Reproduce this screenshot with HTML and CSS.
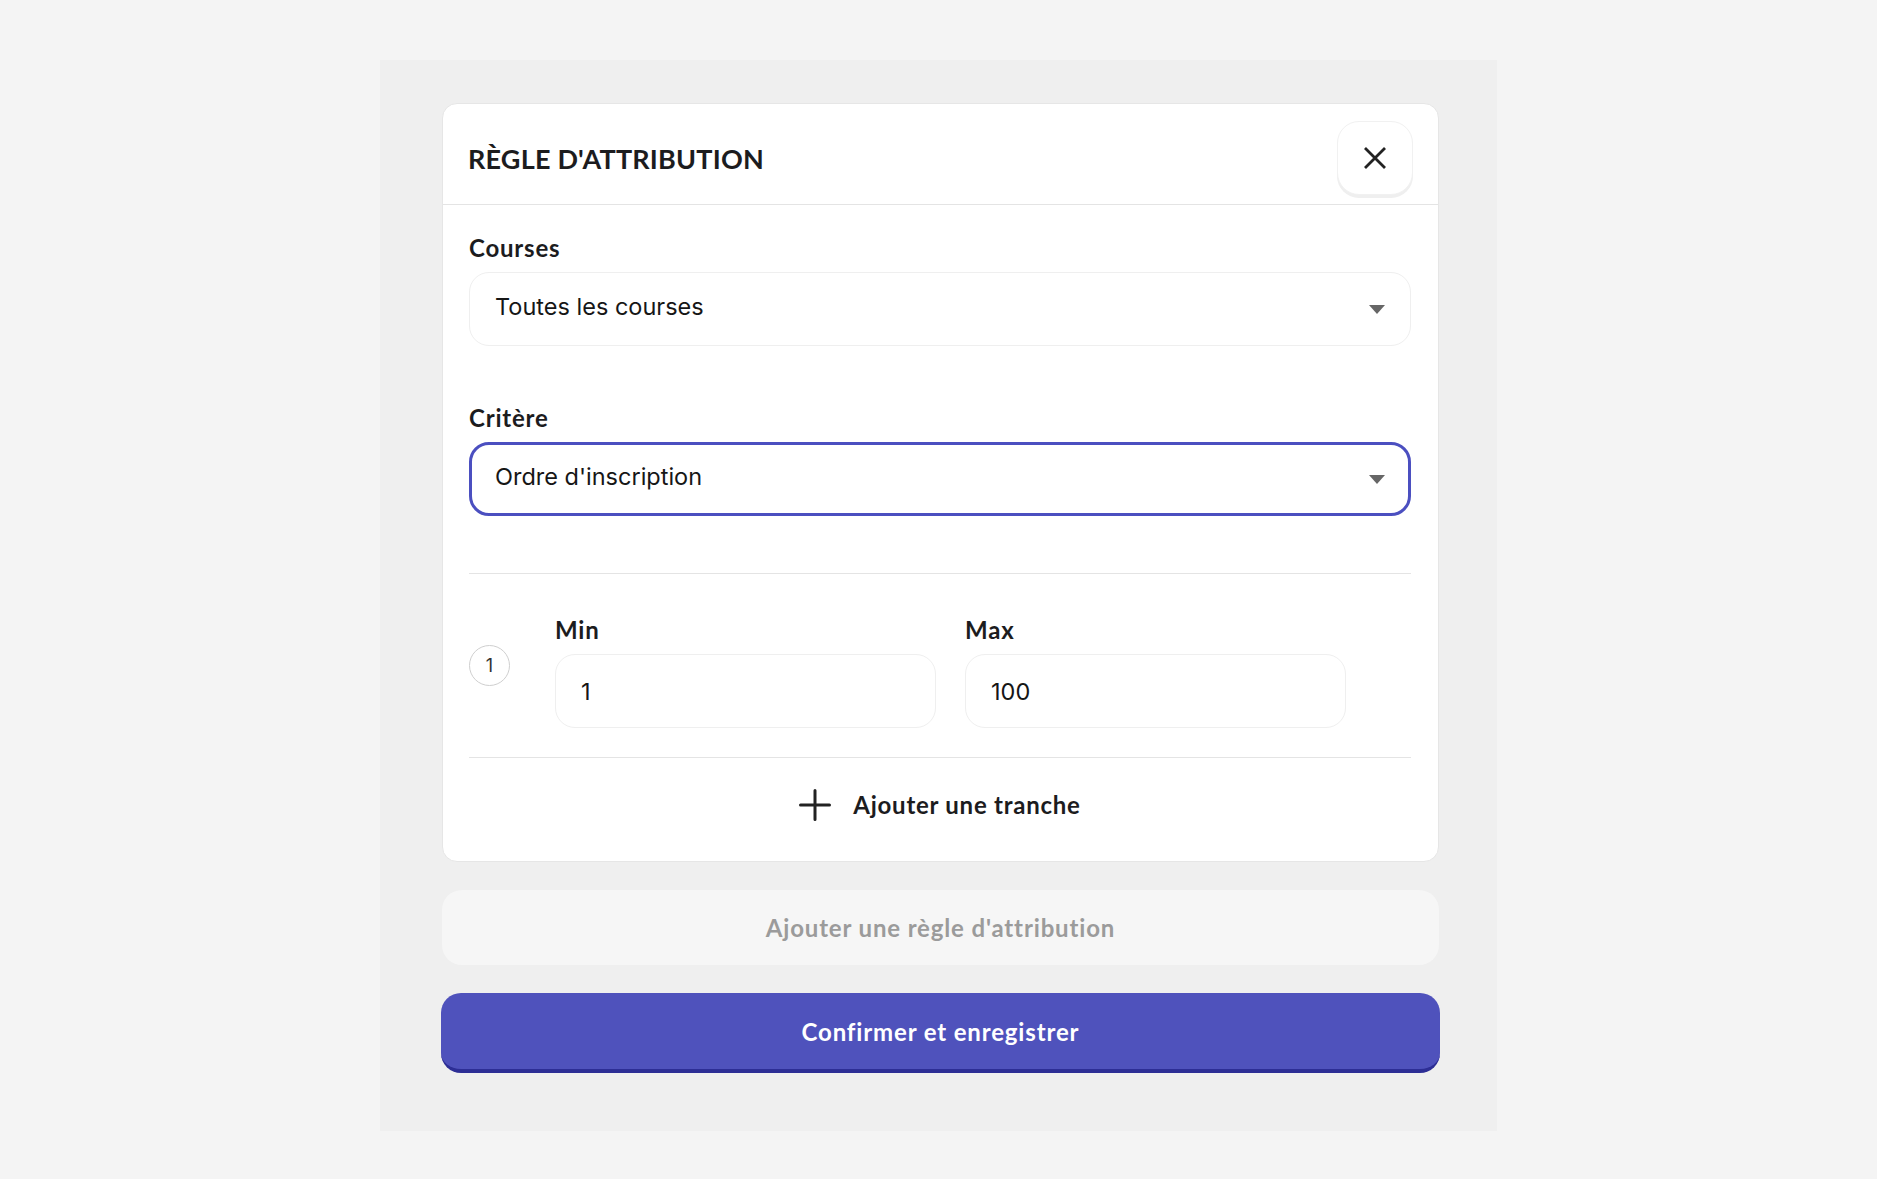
FILE: index.html
```html
<!DOCTYPE html>
<html lang="fr">
<head>
    <meta charset="UTF-8">
    <meta name="viewport" content="width=device-width, initial-scale=1.0">
    <title>Règle d'attribution</title>
    <link rel="stylesheet" href="styles.css">
</head>
<body>

    <div class="panel">

        <div class="card">
            <div class="card-header">
                <h1 class="card-title">RÈGLE D'ATTRIBUTION</h1>
                <button class="close-btn" type="button" aria-label="Fermer">
                    <svg width="24" height="24" viewBox="0 0 24 24">
                        <path d="M2 2 L22 22 M22 2 L2 22" stroke="#222" stroke-width="2.8" fill="none"/>
                    </svg>
                </button>
            </div>

            <div class="card-body">
                <div class="field">
                    <label class="field-label">Courses</label>
                    <div class="select">
                        <span>Toutes les courses</span>
                        <span class="caret"></span>
                    </div>
                </div>

                <div class="field">
                    <label class="field-label">Critère</label>
                    <div class="select select-focus">
                        <span>Ordre d'inscription</span>
                        <span class="caret"></span>
                    </div>
                </div>

                <div class="tranche">
                    <span class="tranche-num">1</span>
                    <div class="tranche-field">
                        <label class="field-label">Min</label>
                        <div class="input">1</div>
                    </div>
                    <div class="tranche-field">
                        <label class="field-label">Max</label>
                        <div class="input">100</div>
                    </div>
                </div>

                <button class="add-tranche" type="button">
                    <svg width="32" height="32" viewBox="0 0 32 32">
                        <path d="M16 1.5 V30.5 M1.5 16 H30.5" stroke="#222" stroke-width="3" stroke-linecap="round" fill="none"/>
                    </svg>
                    <span>Ajouter une tranche</span>
                </button>
            </div>
        </div>

        <button class="ghost-btn" type="button">Ajouter une règle d'attribution</button>
        <button class="primary-btn" type="button">Confirmer et enregistrer</button>

    </div>

</body>
</html>
```

FILE: styles.css
```css
body {
    margin: 0;
    background-color: #f4f4f4;
    font-family: Lato, "Open Sans", sans-serif;
    color: #1c1c1e;
}
button {
    font-family: inherit;
    cursor: pointer;
}
.panel {
    width: 1117px;
    margin: 60px auto 0;
    padding: 43px 58px 58px 62px;
    box-sizing: border-box;
    background-color: #efefef;
}
.card {
    background-color: #fff;
    border: 1px solid #e6e6e6;
    border-radius: 15px;
}
.card-header {
    display: flex;
    align-items: center;
    justify-content: space-between;
    padding: 17px 25px 9px 25px;
    border-bottom: 1px solid #e4e4e4;
}
.card-title {
    margin: 0;
    font-size: 27px;
    font-weight: 700;
    letter-spacing: 0.2px;
}
.close-btn {
    width: 76px;
    height: 74px;
    display: flex;
    align-items: center;
    justify-content: center;
    background-color: #fff;
    border: 1px solid #f1f1f1;
    border-radius: 22px;
    box-shadow: 0 3px 0 #efefef;
}
.card-body {
    padding: 29px 27px 0 26px;
}
.field {
    margin-bottom: 58px;
}
.field + .field {
    margin-bottom: 57px;
}
.field-label {
    display: block;
    font-size: 24px;
    font-weight: 700;
    line-height: 28px;
    letter-spacing: 0.8px;
    margin-bottom: 10px;
}
.select,
.input {
    height: 74px;
    box-sizing: border-box;
    display: flex;
    align-items: center;
    justify-content: space-between;
    padding: 0 25px;
    border: 1px solid #efefef;
    border-radius: 20px;
    font-family: Inter, "Noto Sans", sans-serif;
    font-size: 23.5px;
    color: #161616;
}
.select {
    padding-bottom: 5px;
}
.select-focus {
    border: 3px solid #4b4fc0;
    padding: 0 23px 5px;
}
.caret {
    width: 0;
    height: 0;
    margin-top: 5px;
    border-left: 8.5px solid transparent;
    border-right: 8.5px solid transparent;
    border-top: 9px solid #666;
}
.tranche {
    display: flex;
    align-items: flex-start;
    padding: 42px 0 29px;
    border-top: 1px solid #e4e4e4;
    border-bottom: 1px solid #e4e4e4;
}
.tranche-num {
    width: 41px;
    height: 41px;
    box-sizing: border-box;
    margin-top: 29px;
    margin-right: 45px;
    border: 1.5px solid #cfcfcf;
    border-radius: 50%;
    display: flex;
    align-items: center;
    justify-content: center;
    font-family: Inter, "Noto Sans", sans-serif;
    font-size: 18px;
    color: #333;
}
.tranche-field {
    width: 381px;
    margin-right: 29px;
}
.add-tranche {
    width: 100%;
    height: 103px;
    padding: 0 0 10px;
    display: flex;
    align-items: center;
    justify-content: center;
    gap: 22px;
    background: none;
    border: none;
    font-size: 24px;
    font-weight: 700;
    letter-spacing: 0.75px;
    color: #1c1c1e;
}
.ghost-btn,
.primary-btn {
    display: block;
    border-radius: 20px;
    font-size: 24px;
    font-weight: 700;
    letter-spacing: 0.85px;
}
.ghost-btn {
    width: 100%;
    height: 75px;
    margin-top: 28px;
    background-color: #f6f6f6;
    border: none;
    color: #9b9b9b;
}
.primary-btn {
    width: calc(100% + 2px);
    height: 80px;
    margin: 28px 0 0 -1px;
    background-color: #4f52bc;
    border: none;
    border-bottom: 4px solid #2d2e95;
    color: #fff;
}
```
